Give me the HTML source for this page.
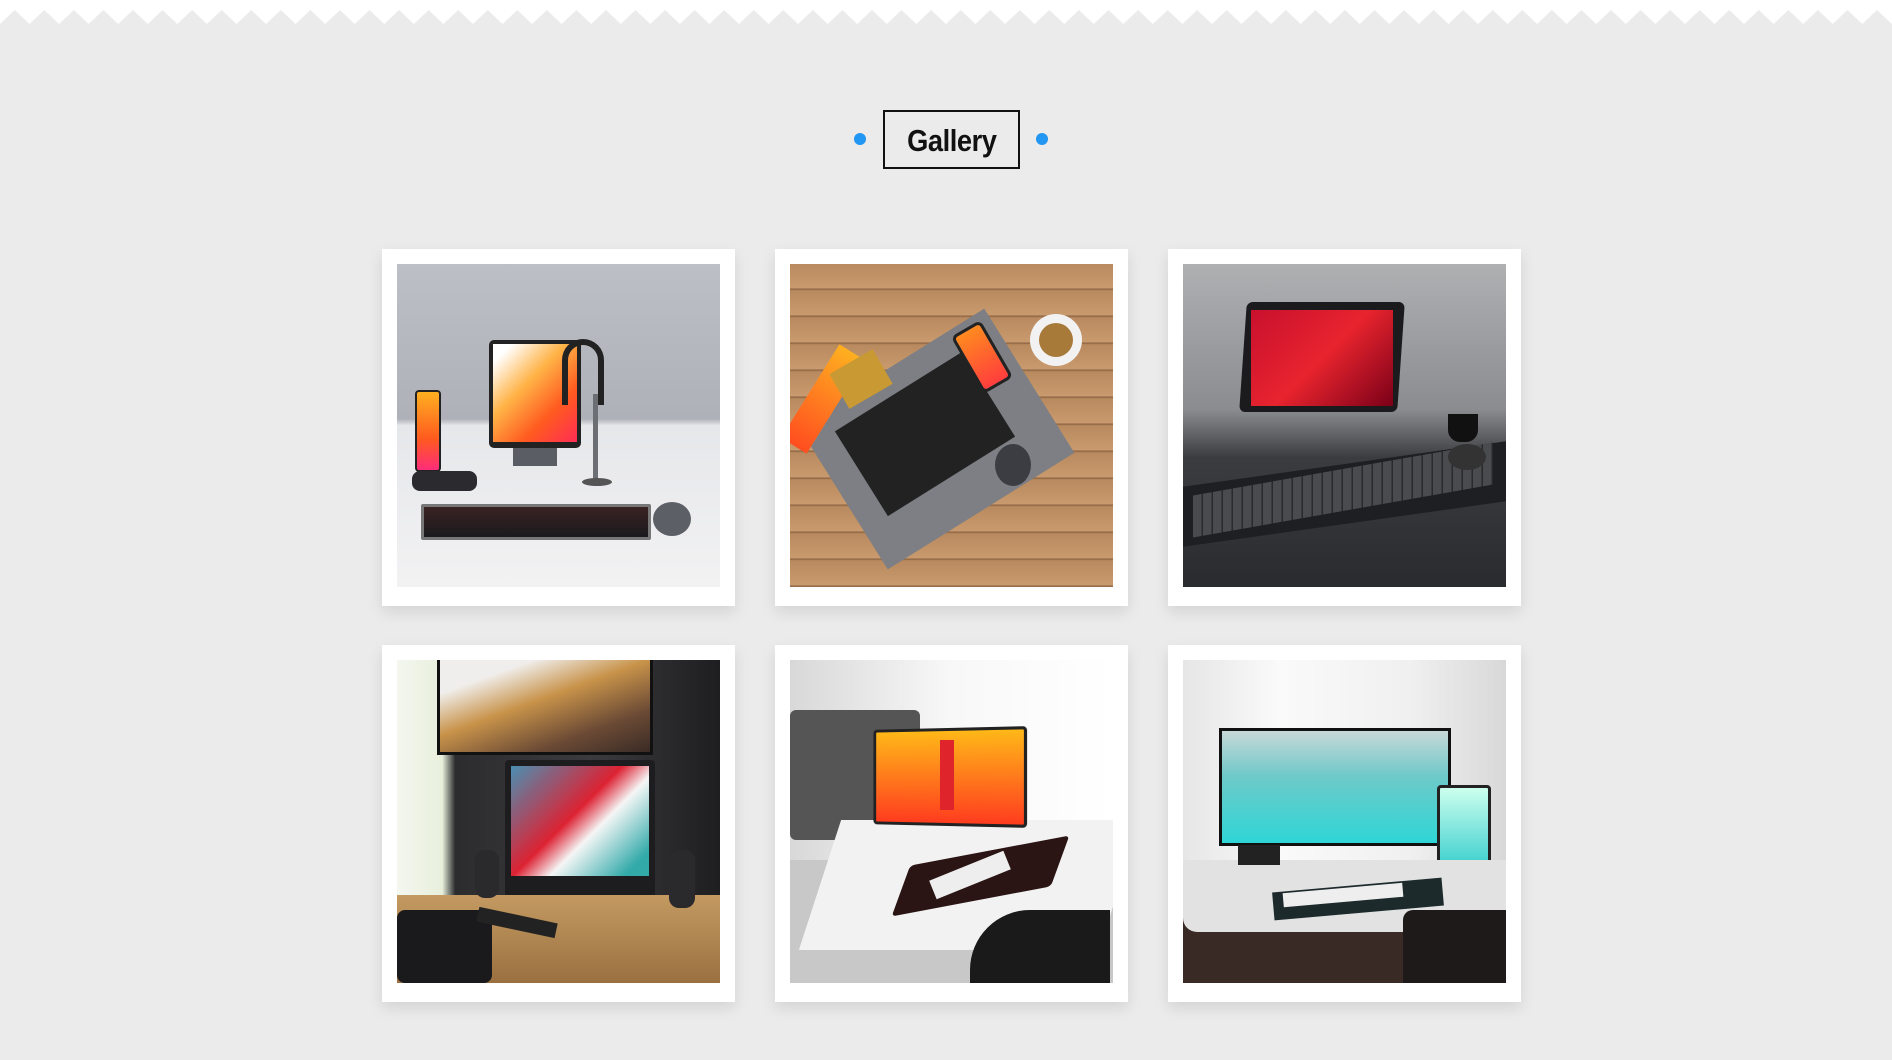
<!DOCTYPE html>
<html><head><meta charset="utf-8"><style>
*{margin:0;padding:0;box-sizing:border-box}
body{width:1892px;height:1060px;background:#ebebeb;position:relative;overflow:hidden;font-family:"Liberation Sans",sans-serif}
.zig{position:absolute;left:0;top:0;width:1892px;height:24px}
.title{position:absolute;left:883px;top:110px;width:137px;height:59px;border:2px solid #111;font-weight:bold;font-size:31px;line-height:55px;text-align:center;color:#111;letter-spacing:-0.5px}
.title span{display:inline-block;transform:scaleX(0.88);position:relative;top:1px}
.dot{position:absolute;width:12px;height:12px;border-radius:50%;background:#2196f3;top:133px}
.card{position:absolute;width:353px;height:357px;background:#fff;box-shadow:0 6px 14px rgba(0,0,0,0.10)}
.img{position:absolute;left:15px;top:15px;width:323px;height:323px;overflow:hidden}
.img div{position:absolute}
</style></head><body>
<svg class="zig" viewBox="0 0 1892 24" preserveAspectRatio="none">
<defs><pattern id="z" width="29.56" height="24" patternUnits="userSpaceOnUse"><path d="M0 0H29.56V24L14.78 10L0 24Z" fill="#fff"/></pattern></defs>
<rect width="1892" height="24" fill="url(#z)"/></svg>
<div class="dot" style="left:854px"></div>
<div class="title"><span>Gallery</span></div>
<div class="dot" style="left:1036px"></div>

<div class="card" style="left:382px;top:249px"><div class="img" style="background:linear-gradient(#bcc0c6 0%,#aeb2b8 48%,#e6e7ea 50%,#f2f2f3 100%);height:323px">
<div style="left:92px;top:76px;width:92px;height:108px;background:#222;border-radius:5px"></div>
<div style="left:96px;top:80px;width:84px;height:98px;background:linear-gradient(135deg,#fff 10%,#ffb347 40%,#ff5a1f 70%,#ff2d55)"></div>
<div style="left:18px;top:126px;width:26px;height:82px;background:linear-gradient(#ffb020,#ff5a1f 60%,#ff2d7a);border:2px solid #222;border-radius:4px"></div>
<div style="left:15px;top:207px;width:65px;height:20px;background:#2b2b2f;border-radius:8px"></div>
<div style="left:116px;top:184px;width:44px;height:18px;background:#5a5d63"></div>
<div style="left:165px;top:75px;width:42px;height:66px;border:6px solid #222;border-bottom:none;border-radius:22px 22px 0 0"></div>
<div style="left:196px;top:130px;width:5px;height:90px;background:#6b6e73"></div>
<div style="left:185px;top:214px;width:30px;height:8px;background:#555;border-radius:50%"></div>
<div style="left:24px;top:240px;width:230px;height:36px;background:linear-gradient(#3a2222,#1a1a1e);border:3px solid #777;border-radius:2px"></div>
<div style="left:256px;top:238px;width:38px;height:34px;background:#5c5f66;border-radius:50%"></div>
</div></div>

<div class="card" style="left:775px;top:249px"><div class="img" style="background:repeating-linear-gradient(180deg,#b98a5f 0,#c89a6d 24px,#8a6242 25px,#c08f62 27px)">
<div style="left:36px;top:90px;width:220px;height:170px;background:#7d7f84;transform:rotate(-32deg)"></div>
<div style="left:60px;top:120px;width:150px;height:100px;background:#222;transform:rotate(-32deg)"></div>
<div style="left:175px;top:60px;width:34px;height:66px;background:linear-gradient(#ff8a1f,#ff3d3d);border:3px solid #222;border-radius:6px;transform:rotate(-30deg)"></div>
<div style="left:18px;top:80px;width:30px;height:110px;background:linear-gradient(#ffb020,#ff4d1f);transform:rotate(32deg)"></div>
<div style="left:240px;top:50px;width:52px;height:52px;background:#fff;border-radius:50%;box-shadow:inset 0 0 0 9px #f2f2f2,inset 0 0 0 30px #a87a3a"></div>
<div style="left:205px;top:180px;width:36px;height:42px;background:#3b3d42;border-radius:50%"></div>
<div style="left:46px;top:95px;width:50px;height:40px;background:#c99a33;transform:rotate(-30deg)"></div>
</div></div>

<div class="card" style="left:1168px;top:249px"><div class="img" style="background:linear-gradient(#aeb0b2,#8a8c8f 45%,#3b3c3f 60%,#2a2b2e)">
<div style="left:60px;top:38px;width:158px;height:110px;background:#1b1b1d;border-radius:6px;transform:skewX(-4deg)"></div>
<div style="left:68px;top:46px;width:142px;height:96px;background:linear-gradient(135deg,#c8102e,#e8242e 50%,#7a0018)"></div>
<div style="left:0px;top:200px;width:323px;height:60px;background:#1e1f22;transform:skewY(-8deg)"></div>
<div style="left:10px;top:205px;width:300px;height:42px;background:repeating-linear-gradient(90deg,#4a4b4e 0,#4a4b4e 8px,#2a2a2c 9px,#2a2a2c 10px);transform:skewY(-10deg)"></div>
<div style="left:265px;top:150px;width:30px;height:28px;background:#111;border-radius:0 0 12px 12px"></div>
<div style="left:265px;top:180px;width:38px;height:26px;background:#333;border-radius:50%"></div>
</div></div>

<div class="card" style="left:382px;top:645px"><div class="img" style="background:linear-gradient(90deg,#f4f6f0 0,#e8f0dc 14%,#2c2c2e 18%,#3b3b3d 60%,#1e1e20)">
<div style="left:40px;top:0;width:216px;height:95px;background:linear-gradient(160deg,#f0eeec 20%,#c8934a 45%,#6b4a35 75%,#3a2b25);border:3px solid #111;border-top:none"></div>
<div style="left:108px;top:100px;width:150px;height:138px;background:#1d1d1f;border-radius:4px"></div>
<div style="left:114px;top:106px;width:138px;height:110px;background:linear-gradient(135deg,#4a8fb3,#d23 45%,#f5f5f5 60%,#3aa 90%)"></div>
<div style="left:0;top:235px;width:323px;height:88px;background:linear-gradient(#c49a62,#9a7040)"></div>
<div style="left:0;top:250px;width:95px;height:73px;background:#1a1a1c;border-radius:8px"></div>
<div style="left:80px;top:255px;width:80px;height:15px;background:#222;transform:rotate(12deg)"></div>
<div style="left:78px;top:190px;width:24px;height:48px;background:#2a2a2c;border-radius:10px"></div>
<div style="left:272px;top:190px;width:26px;height:58px;background:#2a2a2c;border-radius:10px"></div>
</div></div>

<div class="card" style="left:775px;top:645px"><div class="img" style="background:linear-gradient(90deg,#d8d8d8,#f8f8f8 50%,#fff)">
<div style="left:0;top:50px;width:130px;height:130px;background:#555;border-radius:6px"></div>
<div style="left:0;top:200px;width:323px;height:123px;background:#c8c8c8"></div>
<div style="left:30px;top:160px;width:300px;height:130px;background:#f2f2f2;transform:skewX(-18deg)"></div>
<div style="left:80px;top:68px;width:155px;height:98px;background:linear-gradient(#ffb818,#ff7a1c 50%,#ff3c1e);border:3px solid #222;border-radius:4px;transform:perspective(300px) rotateY(-8deg)"></div>
<div style="left:150px;top:80px;width:14px;height:70px;background:#e0242c"></div>
<div style="left:118px;top:190px;width:145px;height:52px;background:#2a1414;transform:skewX(-30deg) rotate(-12deg);border-radius:4px"></div>
<div style="left:140px;top:205px;width:80px;height:20px;background:#eee;transform:rotate(-22deg)"></div>
<div style="left:180px;top:250px;width:140px;height:73px;background:#1a1a1a;border-radius:60px 0 0 0"></div>
</div></div>

<div class="card" style="left:1168px;top:645px"><div class="img" style="background:linear-gradient(90deg,#e6e6e6,#fafafa 30%,#f0f0f0 70%,#d8d8d8)">
<div style="left:36px;top:68px;width:232px;height:118px;background:linear-gradient(#c8d8d8,#6fc9c9 40%,#2fd6d6);border:3px solid #111"></div>
<div style="left:254px;top:125px;width:54px;height:90px;background:linear-gradient(#cfe,#3cc);border:3px solid #222;border-radius:4px"></div>
<div style="left:0;top:210px;width:323px;height:113px;background:#3a2a26"></div>
<div style="left:0;top:200px;width:323px;height:72px;background:#e2e2e2;border-radius:0 0 14px 14px"></div>
<div style="left:90px;top:225px;width:170px;height:28px;background:#1d2a2c;transform:rotate(-5deg)"></div>
<div style="left:100px;top:228px;width:120px;height:14px;background:#eee;transform:rotate(-5deg)"></div>
<div style="left:55px;top:185px;width:42px;height:20px;background:#222"></div>
<div style="left:220px;top:250px;width:103px;height:73px;background:#1f1a1a;border-radius:10px 0 0 0"></div>
</div></div>
</body></html>
